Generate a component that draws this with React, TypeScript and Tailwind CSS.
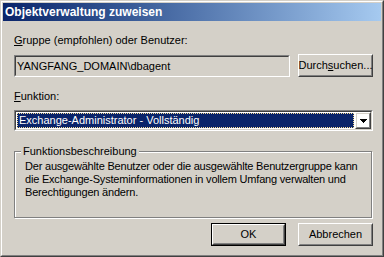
import React from "react";

function Btn({ children, className = "" }: { children: React.ReactNode; className?: string }) {
  return (
    <div className={`border border-t-white border-l-white border-r-[#404040] border-b-[#404040] ${className}`}>
      <div className="h-full border border-t-[#d4d0c8] border-l-[#d4d0c8] border-r-[#808080] border-b-[#808080] flex items-center justify-center whitespace-nowrap">
        {children}
      </div>
    </div>
  );
}

function Sunken({ children, className = "", inner = "" }: { children: React.ReactNode; className?: string; inner?: string }) {
  return (
    <div className={`border border-t-[#808080] border-l-[#808080] border-r-white border-b-white ${className}`}>
      <div className={`h-full border border-t-[#404040] border-l-[#404040] border-r-[#d4d0c8] border-b-[#d4d0c8] ${inner}`}>
        {children}
      </div>
    </div>
  );
}

export default function App() {
  return (
    <div className="w-[384px] h-[257px] bg-[#d4d0c8] border border-t-[#d4d0c8] border-l-[#d4d0c8] border-r-[#404040] border-b-[#404040] font-['Liberation_Sans',Arial,sans-serif] text-[11px] leading-[13px] text-black">
      <div className="h-full border border-t-white border-l-white border-r-[#808080] border-b-[#808080] p-px flex flex-col">
        <div className="h-[18px] shrink-0 bg-linear-to-r from-[#0a246a] to-[#a6caf0] flex items-center pl-[2px] text-white font-bold text-[12px]">
          Objektverwaltung zuweisen
        </div>
        <div className="flex-1 pl-[11px] pr-[8px] pt-[13px] flex flex-col">
          <div>
            <u>G</u>ruppe (empfohlen) oder Benutzer:
          </div>
          <div className="mt-[7px] flex items-start gap-[8px]">
            <Sunken className="flex-1 h-[22px] mt-px" inner="bg-[#d4d0c8] flex items-center pl-px">
              YANGFANG_DOMAIN\dbagent
            </Sunken>
            <Btn className="w-[75px] h-[23px]">
              Durch<u>s</u>uchen...
            </Btn>
          </div>
          <div className="mt-[13px]">
            <u>F</u>unktion:
          </div>
          <Sunken className="mt-[7px] h-[21px]" inner="bg-white flex">
            <div className="flex-1 m-px bg-[#0a246a] border border-dotted border-[#f5db95] text-white flex items-center pl-px">
              Exchange-Administrator - Vollständig
            </div>
            <Btn className="w-[16px] h-full">
              <svg width="7" height="4" viewBox="0 0 7 4" shapeRendering="crispEdges">
                <rect x="0" y="0" width="7" height="1" fill="#000" />
                <rect x="1" y="1" width="5" height="1" fill="#000" />
                <rect x="2" y="2" width="3" height="1" fill="#000" />
                <rect x="3" y="3" width="1" height="1" fill="#000" />
              </svg>
            </Btn>
          </Sunken>
          <div className="relative mt-[20px] mr-px h-[67px] border border-[#808080] shadow-[1px_1px_0_white,inset_1px_1px_0_white] pt-[8px] pl-[10px]">
            <span className="absolute left-[6px] -top-[7px] px-[2px] bg-[#d4d0c8]">Funktionsbeschreibung</span>
            <p className="tracking-[-0.2px]">
              Der ausgewählte Benutzer oder die ausgewählte Benutzergruppe kann
              <br />
              die Exchange-Systeminformationen in vollem Umfang verwalten und
              <br />
              Berechtigungen ändern.
            </p>
          </div>
          <div className="mt-[5px] flex justify-end gap-[12px]">
            <div className="border border-black w-[75px] h-[23px]">
              <Btn className="h-full">OK</Btn>
            </div>
            <Btn className="w-[75px] h-[23px]">Abbrechen</Btn>
          </div>
        </div>
      </div>
    </div>
  );
}
